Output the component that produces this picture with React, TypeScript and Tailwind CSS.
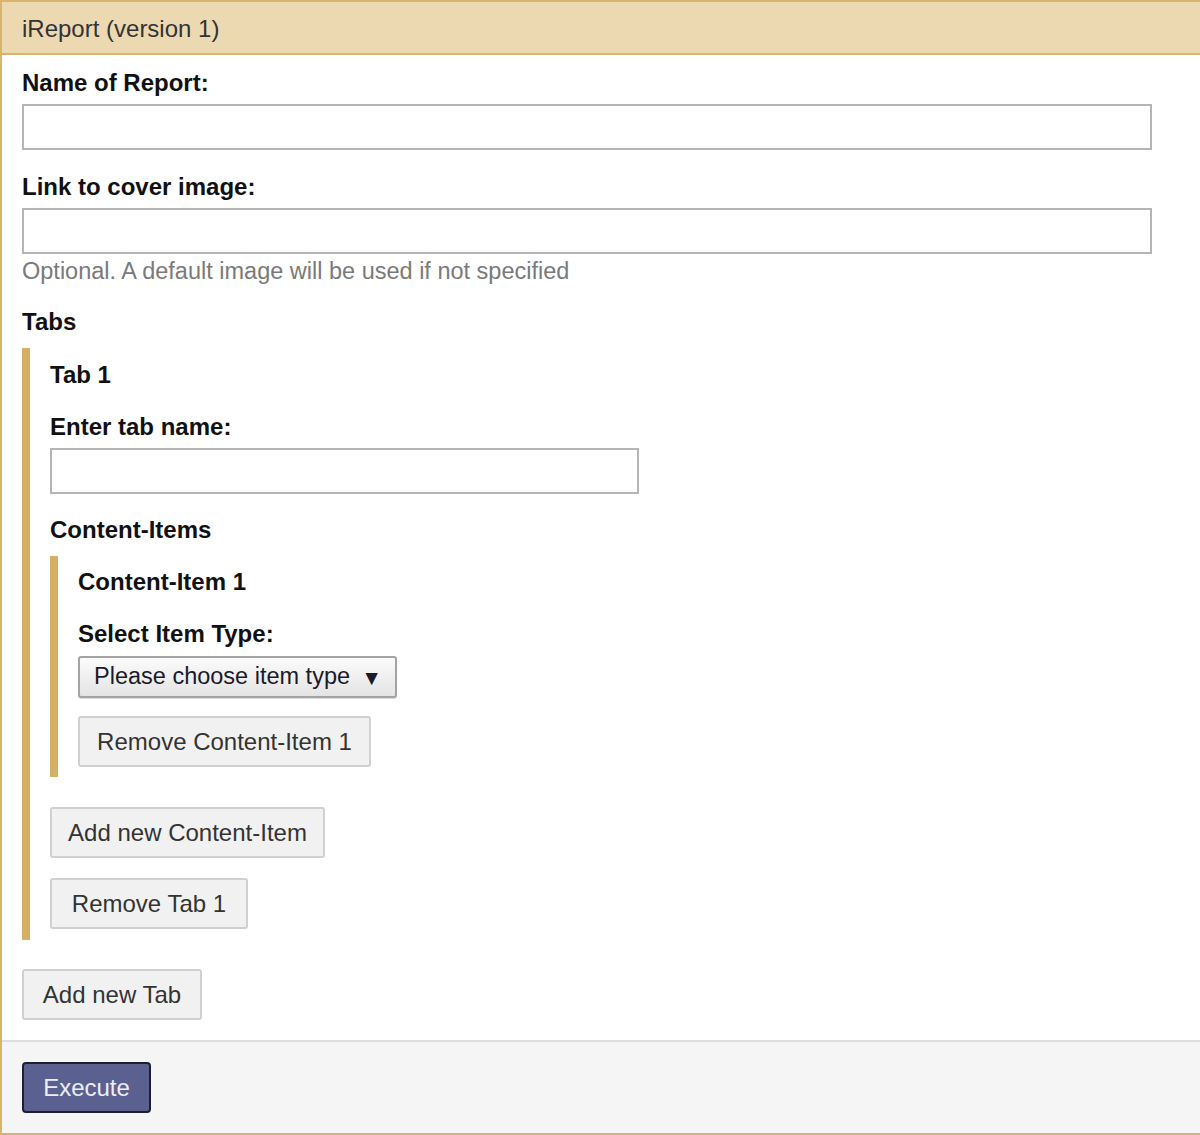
import React from "react";

const font = "font-['Liberation_Sans',Arial,sans-serif]";

function Label({ children, className = "" }: { children: React.ReactNode; className?: string }) {
  return (
    <div className={`h-[34px] leading-[34px] text-[24px] font-bold text-[#111] whitespace-nowrap ${className}`}>
      {children}
    </div>
  );
}

function TextInput({ className = "" }: { className?: string }) {
  return (
    <input
      type="text"
      className={`block h-[46px] border-2 border-[#b5b5b5] bg-white px-2 text-[23px] outline-none ${className}`}
    />
  );
}

function Btn({ children, className = "" }: { children: React.ReactNode; className?: string }) {
  return (
    <button
      type="button"
      className={`block h-[51px] whitespace-nowrap rounded-[3px] border-2 border-[#d0d0d0] bg-[#f1f1f1] px-[16px] text-[24px] leading-none text-[#333] ${className}`}
    >
      {children}
    </button>
  );
}

export default function App() {
  return (
    <div className={`${font} w-[1200px] bg-white`}>
      <div className="border-l-2 border-t-2 border-b-2 border-[#d8b56b]">
        {/* Header */}
        <div className="flex h-[53px] items-center border-b-2 border-[#d8b56b] bg-[#ecd9b2] pl-5 pt-[2px]">
          <span className="text-[24px] leading-[34px] text-[#333]">iReport (version 1)</span>
        </div>

        {/* Body */}
        <div className="pl-5 pt-[11px] pb-5">
          <Label>Name of Report:</Label>
          <TextInput className="mt-[4px] w-[1130px]" />

          <Label className="mt-[20px]">Link to cover image:</Label>
          <TextInput className="mt-[4px] w-[1130px]" />
          <div className="h-[34px] leading-[34px] text-[23.5px] text-[#7a7a7a] whitespace-nowrap">
            Optional. A default image will be used if not specified
          </div>

          <Label className="mt-[17px]">Tabs</Label>

          {/* Tab block */}
          <div className="mt-[9px] border-l-[8px] border-[#d5b062] pl-5 pt-[10px] pb-[11px]">
            <Label>Tab 1</Label>
            <Label className="mt-[18px]">Enter tab name:</Label>
            <TextInput className="mt-[4px] w-[589px]" />

            <Label className="mt-[19px]">Content-Items</Label>

            {/* Content item block */}
            <div className="mt-[9px] border-l-[8px] border-[#d5b062] pl-5 pt-[9px] pb-[10px]">
              <Label>Content-Item 1</Label>
              <Label className="mt-[18px]">Select Item Type:</Label>
              <button
                type="button"
                className="mt-[5px] flex h-[42px] w-[319px] items-center justify-between whitespace-nowrap rounded-[3px] border-2 border-[#a3a3a3] bg-gradient-to-b from-[#fbfbfb] to-[#e4e4e4] pl-[14px] pr-[13px] text-[23.5px] text-[#1a1a2a] shadow-[0_1px_1px_rgba(0,0,0,0.15)]"
              >
                <span>Please choose item type</span>
                <span className="text-[21px] leading-none">▼</span>
              </button>
              <Btn className="mt-[18px] w-[293px]">Remove Content-Item 1</Btn>
            </div>

            <Btn className="mt-[30px] w-[275px]">Add new Content-Item</Btn>
            <Btn className="mt-[20px] w-[198px]">Remove Tab 1</Btn>
          </div>

          <Btn className="mt-[29px] w-[180px]">Add new Tab</Btn>
        </div>

        {/* Footer */}
        <div className="border-t-2 border-[#dedede] bg-[#f5f5f5] pl-5 pt-5 pb-5">
          <button
            type="button"
            className="block h-[51px] w-[129px] rounded-[4px] border-2 border-[#1e1f2c] bg-[#5a6190] text-[24px] leading-none text-[#eceef6]"
          >
            Execute
          </button>
        </div>
      </div>
    </div>
  );
}
